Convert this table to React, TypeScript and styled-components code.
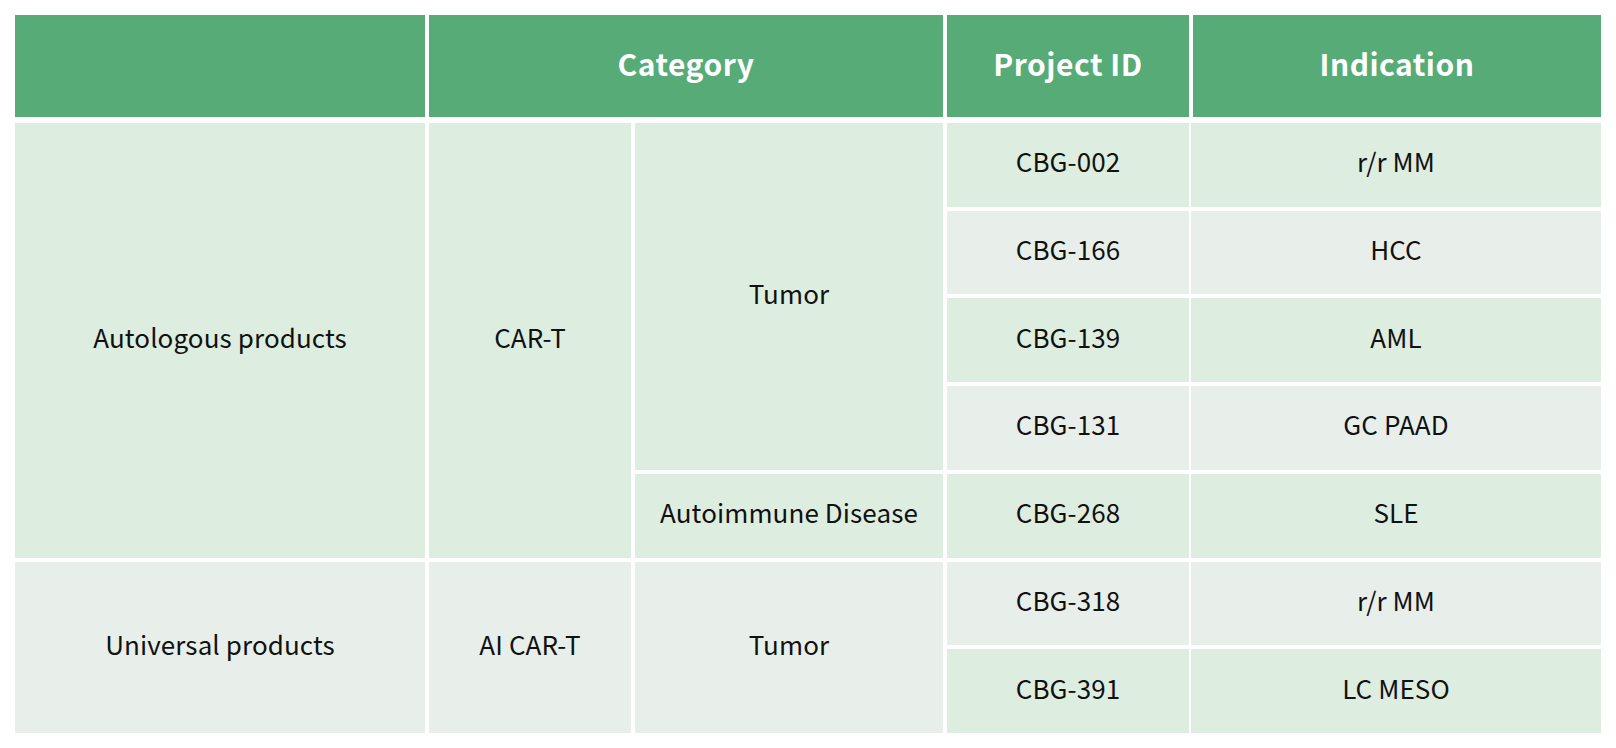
import React from "react";
import styled, { createGlobalStyle } from "styled-components";

const GlobalStyle = createGlobalStyle`
  html, body {
    margin: 0;
    padding: 0;
    background: #ffffff;
  }
  body {
    font-family: "Noto Sans CJK SC", "Noto Sans", sans-serif;
    color: #111111;
  }
`;

const Page = styled.div`
  padding: 15px;
`;

const Table = styled.div`
  display: grid;
  width: 1586px;
  height: 718px;
  grid-template-columns: 410px 202px 308px 242px 408px;
  grid-template-rows: 104px repeat(7, 1fr);
  column-gap: 4px;
  row-gap: 4px;
`;

type Tone = "green" | "gray";

const HeadCell = styled.div<{ $col: string }>`
  grid-column: ${(p) => p.$col};
  grid-row: 1;
  margin-bottom: 2px;
  padding-bottom: 6px;
  box-sizing: border-box;
  background: #56ab77;
  color: #ffffff;
  font-weight: 700;
  font-size: 30px;
  line-height: 1;
  letter-spacing: 0.5px;
  display: flex;
  align-items: center;
  justify-content: center;
`;

const Cell = styled.div<{ $col: string; $row: string; $tone: Tone; $tight?: boolean }>`
  grid-column: ${(p) => p.$col};
  grid-row: ${(p) => p.$row};
  margin-left: ${(p) => (p.$tight ? "-2px" : "0")};
  padding-bottom: 7px;
  box-sizing: border-box;
  background: ${(p) => (p.$tone === "green" ? "#ddede0" : "#e8efea")};
  font-size: 26px;
  line-height: 1;
  font-weight: 400;
  letter-spacing: 0.1px;
  display: flex;
  align-items: center;
  justify-content: center;
  text-align: center;
`;

const projects: { id: string; ind: string; tone: Tone }[] = [
  { id: "CBG-002", ind: "r/r MM", tone: "green" },
  { id: "CBG-166", ind: "HCC", tone: "gray" },
  { id: "CBG-139", ind: "AML", tone: "green" },
  { id: "CBG-131", ind: "GC PAAD", tone: "gray" },
  { id: "CBG-268", ind: "SLE", tone: "green" },
  { id: "CBG-318", ind: "r/r MM", tone: "gray" },
  { id: "CBG-391", ind: "LC MESO", tone: "green" },
];

export default function App() {
  return (
    <>
      <GlobalStyle />
      <Page>
        <Table>
          <HeadCell $col="1" />
          <HeadCell $col="2 / span 2">Category</HeadCell>
          <HeadCell $col="4">Project ID</HeadCell>
          <HeadCell $col="5">Indication</HeadCell>

          <Cell $col="1" $row="2 / span 5" $tone="green">Autologous products</Cell>
          <Cell $col="2" $row="2 / span 5" $tone="green">CAR-T</Cell>
          <Cell $col="3" $row="2 / span 4" $tone="green">Tumor</Cell>
          <Cell $col="3" $row="6" $tone="green">Autoimmune Disease</Cell>

          <Cell $col="1" $row="7 / span 2" $tone="gray">Universal products</Cell>
          <Cell $col="2" $row="7 / span 2" $tone="gray">AI CAR-T</Cell>
          <Cell $col="3" $row="7 / span 2" $tone="gray">Tumor</Cell>

          {projects.map((p, i) => (
            <React.Fragment key={p.id}>
              <Cell $col="4" $row={String(i + 2)} $tone={p.tone}>{p.id}</Cell>
              <Cell $col="5" $row={String(i + 2)} $tone={p.tone} $tight>{p.ind}</Cell>
            </React.Fragment>
          ))}
        </Table>
      </Page>
    </>
  );
}
